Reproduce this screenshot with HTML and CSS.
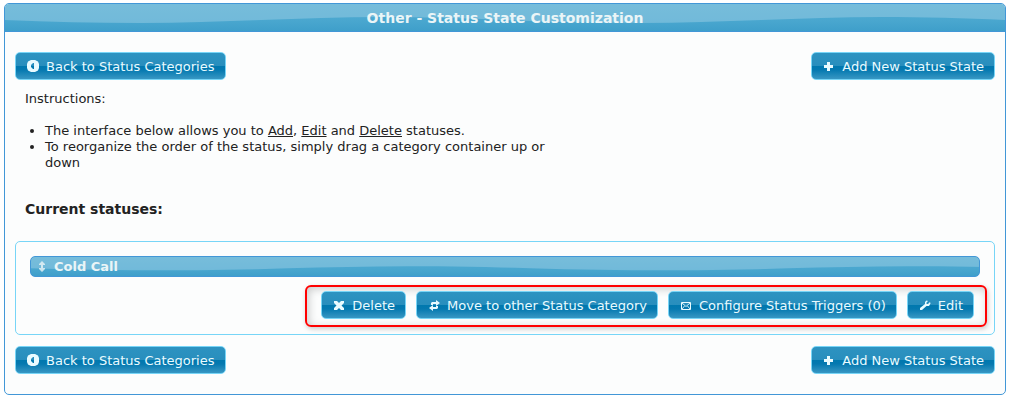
FILE: index.html
```html
<!DOCTYPE html>
<html lang="en">
<head>
    <meta charset="UTF-8">
    <meta name="viewport" content="width=device-width, initial-scale=1.0">
    <title>Status State Customization</title>
    <link rel="stylesheet" href="styles.css">
</head>
<body>
<svg class="sprite" aria-hidden="true">
    <symbol id="icon-back" viewBox="0 0 16 16">
        <path fill="currentColor" fill-rule="evenodd" d="M6 1h4l3 1.500L14 5v4l-1 2.500L10 13H6l-3-1.500L2 9V5l1-2.500zM9 4v6H8L6 8V6l2-2z"/>
    </symbol>
    <symbol id="icon-plus" viewBox="0 0 16 16">
        <path fill="currentColor" d="M6 3h3v3h3v3H9v3H6V9H3V6h3z"/>
    </symbol>
    <symbol id="icon-close" viewBox="0 0 16 16">
        <path fill="currentColor" d="M3 3h3l2 2 2-2h3v2l-2.500 2.500L13 10v2h-3l-2-2-2 2H3v-2l2.500-2.500L3 5z"/>
    </symbol>
    <symbol id="icon-transfer" viewBox="0 0 16 16">
        <path fill="currentColor" d="M6 4h4V2l4 3-4 3V6H7v1H5V5zM11 11H7v2l-4-3 4-3v2h3V8h2v2z"/>
    </symbol>
    <symbol id="icon-mail" viewBox="0 0 16 16">
        <path fill="none" stroke="currentColor" d="M3.500 4.500h9v7h-9z"/>
        <path fill="none" stroke="currentColor" stroke-width=".9" d="M4 5l4 3.500L12 5M4 11l2.500-3M12 11L9.500 8"/>
    </symbol>
    <symbol id="icon-wrench" viewBox="0 0 16 16">
        <path fill="currentColor" d="M11 3L9.500 4.500V6h1.500l2-2 .5 1.500L12 8H9.500L5 12H3v-2l5-4V4l1.500-1.500z"/>
    </symbol>
    <symbol id="icon-drag" viewBox="0 0 16 16">
        <path fill="currentColor" d="M8 2l3 3v1H9v3h2v1l-3 3-3-3V9h2V6H5V5z"/>
    </symbol>
</svg>

<div class="panel">
    <h1 class="panel-header">Other - Status State Customization</h1>
    <div class="panel-content">
        <div class="toolbar">
            <button type="button" class="button"><svg class="icon"><use href="#icon-back"/></svg>Back to Status Categories</button>
            <button type="button" class="button"><svg class="icon"><use href="#icon-plus"/></svg>Add New Status State</button>
        </div>

        <div class="instructions">
            <p>Instructions:</p>
            <ul>
                <li>The interface below allows you to <u>Add</u>, <u>Edit</u> and <u>Delete</u> statuses.</li>
                <li>To reorganize the order of the status, simply drag a category container up or down</li>
            </ul>
        </div>

        <h2 class="list-title">Current statuses:</h2>

        <div class="status">
            <h3 class="status-header"><svg class="icon"><use href="#icon-drag"/></svg>Cold Call</h3>
            <div class="status-actions">
                <button type="button" class="button"><svg class="icon"><use href="#icon-close"/></svg>Delete</button>
                <button type="button" class="button"><svg class="icon"><use href="#icon-transfer"/></svg>Move to other Status Category</button>
                <button type="button" class="button"><svg class="icon"><use href="#icon-mail"/></svg>Configure Status Triggers (0)</button>
                <button type="button" class="button"><svg class="icon"><use href="#icon-wrench"/></svg>Edit</button>
            </div>
        </div>

        <div class="toolbar">
            <button type="button" class="button"><svg class="icon"><use href="#icon-back"/></svg>Back to Status Categories</button>
            <button type="button" class="button"><svg class="icon"><use href="#icon-plus"/></svg>Add New Status State</button>
        </div>
    </div>
</div>
</body>
</html>
```
FILE: styles.css
```css
* {
    box-sizing: border-box;
}

body {
    margin: 3px 7px 8px 4px;
    background-color: #fff;
    color: #222;
    font-family: Verdana, "DejaVu Sans", sans-serif;
    font-size: 13px;
    line-height: 16px;
}

h1, h2, h3, p, ul {
    margin: 0;
}

.sprite {
    display: none;
}

.icon {
    flex: none;
    width: 16px;
    height: 16px;
}

.panel {
    border: 1px solid #4297d7;
    border-radius: 5px;
    background-color: #fcfdfd;
}

/* Glossy bars, the wave repeats every 500px */
.panel-header,
.status-header {
    background-image: url("data:image/svg+xml,%3Csvg xmlns='http://www.w3.org/2000/svg' width='500' height='27' viewBox='0 0 500 27' preserveAspectRatio='none'%3E%3Cpath fill='%23fff' fill-opacity='.22' d='M0 0H500V16C460 14 420 13 376 13C296 13 216 19 136 19C90 19 45 18 0 16z'/%3E%3C/svg%3E"), linear-gradient(#50aad1, #4aa7cf 60%, #3f9fca);
    background-size: 500px 100%, 100% 100%;
    color: #eaf5f7;
}

.panel-header {
    padding: 7px 10px 5px;
    border-bottom: 1px solid #4297d7;
    border-radius: 4px 4px 0 0;
    font-size: 14px;
    line-height: 15px;
    text-align: center;
}

.panel-content {
    padding: 20px 10px;
}

.toolbar {
    display: flex;
    flex-wrap: wrap;
    justify-content: space-between;
    gap: 10px;
}

.button {
    display: inline-flex;
    align-items: center;
    gap: 5px;
    padding: 6px 10px 4px 9px;
    border: 1px solid #77d5f7;
    border-radius: 5px;
    background: linear-gradient(#2d93c1, #288ebd 50%, #0078ae 50%, #0579b0 65%, #3897c3);
    color: #e9fbff;
    font: inherit;
    cursor: pointer;
}

.instructions {
    max-width: 560px;
    padding: 11px 10px 0;
}

.instructions ul {
    margin-top: 16px;
    padding-left: 20px;
}

.list-title {
    padding: 30px 10px 23px;
    font-size: 14px;
    line-height: 17px;
}

.status {
    margin-bottom: 11px;
    padding: 14px 14px 7px;
    border: 1px solid #77d5f7;
    border-radius: 5px;
}

.status-header {
    display: flex;
    align-items: center;
    gap: 4px;
    padding: 2px 3px 1px;
    border: 1px solid #4297d7;
    border-radius: 5px;
    font-size: 13px;
}

.status-header .icon {
    opacity: 0.8;
}

/* Highlighted group, slightly wider than the bar above it */
.status-actions {
    display: flex;
    flex-wrap: wrap;
    gap: 10px;
    width: fit-content;
    margin: 8px -7px 0 auto;
    padding: 4px 11px 6px 14px;
    border: 2px solid #f00;
    border-radius: 6px;
    box-shadow: 1px 2px 5px rgba(0, 0, 0, 0.2), inset 2px 2px 8px rgba(0, 0, 0, 0.2);
}
```
